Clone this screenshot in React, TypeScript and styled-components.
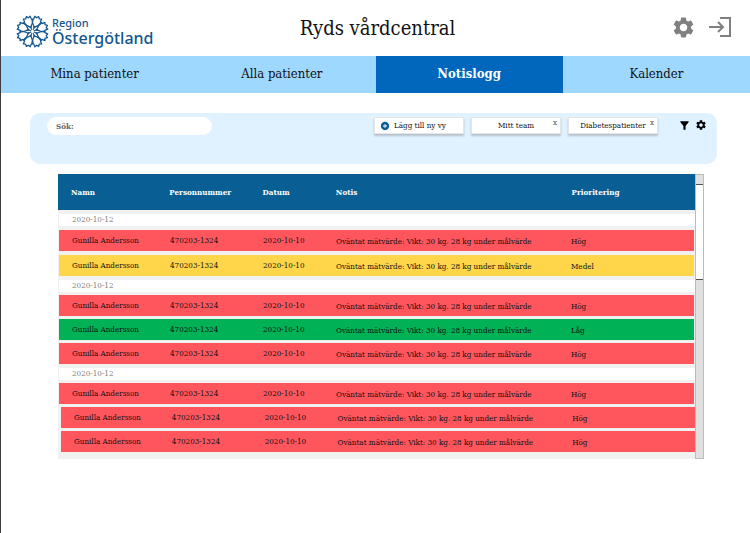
import React from "react";
import styled, { createGlobalStyle, css } from "styled-components";
import { MdSettings, MdFilterAlt, MdAddCircle } from "react-icons/md";

const GlobalStyle = createGlobalStyle`
  * { box-sizing: border-box; }
  body { margin: 0; background: #fff; }
  button, input { font: inherit; color: inherit; }
`;

const Page = styled.div`
  min-height: 100vh;
  border-left: 1px solid #3c3c3c;
  color: #111;
  font-family: "DejaVu Serif Condensed", "DejaVu Serif", serif;
  font-size: 8px;
  line-height: 12px;
`;

const Header = styled.header`
  display: grid;
  grid-template-columns: 1fr auto 1fr;
  align-items: center;
  height: 56px;
  padding: 0 18px 0 14px;
`;

const Logo = styled.a`
  display: flex;
  align-items: center;
  gap: 2px;
  padding-top: 6px;
  color: #14568f;
  text-decoration: none;
  font-family: "Noto Sans", sans-serif;
`;

const LogoText = styled.span`
  display: flex;
  flex-direction: column;
  font-size: 16px;
  font-weight: 500;
  line-height: 16px;
`;

const LogoSmall = styled.span`
  font-size: 11px;
  line-height: 14px;
`;

const Title = styled.h1`
  margin: 0 0 0 8px;
  font-size: 20px;
  line-height: 24px;
  font-weight: 400;
`;

const HeaderActions = styled.div`
  display: flex;
  justify-content: flex-end;
  align-items: center;
  gap: 12px;
  padding-bottom: 2px;
  color: #808080;
`;

const IconButton = styled.button`
  display: flex;
  padding: 0;
  border: 0;
  background: none;
  cursor: pointer;
`;

const Nav = styled.nav`
  display: grid;
  grid-template-columns: repeat(4, 1fr);
  background: #9fd8ff;
`;

const Tab = styled.a<{ $active?: boolean }>`
  height: 37px;
  font-size: 13px;
  line-height: 36px;
  text-align: center;
  text-decoration: none;
  color: #111;
  ${(p) =>
    p.$active &&
    css`
      background: #0067bc;
      color: #fff;
      font-weight: 700;
    `}
`;

const Toolbar = styled.section`
  display: flex;
  align-items: flex-start;
  justify-content: space-between;
  height: 51px;
  margin: 20px 33px 0 29px;
  padding: 4px 10px 0 17px;
  border-radius: 10px;
  background: #e0f1ff;
`;

const Search = styled.label`
  display: flex;
  align-items: center;
  width: 165px;
  height: 18px;
  padding: 0 9px;
  border-radius: 9px;
  background: #fff;
  color: #666;
  font-weight: 700;
`;

const SearchInput = styled.input`
  flex: 1;
  min-width: 0;
  margin-left: 4px;
  padding: 0;
  border: 0;
  outline: 0;
  background: none;
`;

const ToolbarActions = styled.div`
  display: flex;
  align-items: center;
  gap: 7px;
`;

const ViewItem = styled.div`
  position: relative;
  display: flex;
`;

const ViewButton = styled.button<{ $withIcon?: boolean }>`
  display: flex;
  align-items: center;
  justify-content: ${(p) => (p.$withIcon ? "flex-start" : "center")};
  gap: 4px;
  width: 90px;
  height: 17px;
  padding: 0 0 0 ${(p) => (p.$withIcon ? 5 : 0)}px;
  border: 1px solid #e6e6e6;
  background: #fff;
  box-shadow: 0 2px 2px rgba(0, 0, 0, 0.2);
  white-space: nowrap;
  cursor: pointer;
`;

const CloseButton = styled.button`
  position: absolute;
  top: 2px;
  right: 4px;
  padding: 0;
  border: 0;
  background: none;
  color: #555;
  line-height: 8px;
  cursor: pointer;
`;

const ToolIcons = styled.div`
  display: flex;
  gap: 4px;
  margin-left: 13px;
  color: #000;
`;

const LogArea = styled.section`
  display: flex;
  margin: 10px 46px 0 57px;
`;

const Table = styled.table`
  display: block;
  flex: 1;
  padding-bottom: 7px;
  background: #f1f1f1;
`;

const Head = styled.thead`
  display: block;
`;

const Body = styled.tbody`
  display: flex;
  flex-direction: column;
`;

const columns = css`
  display: grid;
  grid-template-columns: 98fr 93fr 73fr 235fr 123fr;
  align-items: center;
  padding-left: 13px;
`;

const HeadRow = styled.tr`
  ${columns}
  height: 36px;
  background: #095f94;
  color: #fff;
`;

const HeadCell = styled.th`
  padding: 0;
  text-align: left;
  font-weight: 700;
`;

const priorityColors = { Hög: "#ff565e", Medel: "#ffd54a", Låg: "#00b156" };
type Priority = keyof typeof priorityColors;

const NoticeRow = styled.tr<{ $priority: Priority; $gap: number; $indent?: boolean }>`
  ${columns}
  height: 21px;
  margin-top: ${(p) => p.$gap}px;
  margin-left: ${(p) => (p.$indent ? 2 : 0)}px;
  margin-right: ${(p) => (p.$indent ? 0 : 1)}px;
  border-left: 1px solid #f1f1f1;
  background: ${(p) => priorityColors[p.$priority]};
`;

const Cell = styled.td<{ $low?: boolean }>`
  padding: ${(p) => (p.$low ? "2px 0 0" : "0")};
  white-space: nowrap;
`;

const DateRow = styled.tr`
  display: block;
  height: 12px;
  margin: 4px 0 0 1px;
  padding-left: 13px;
  background: #fff;
  color: #808080;
`;

const DateCell = styled.th`
  display: block;
  padding: 0;
  font-weight: 400;
  text-align: left;
`;

const ScrollTrack = styled.div`
  display: flex;
  flex-direction: column;
  width: 9px;
  padding-top: 9px;
  border: 1px solid #bcbcbc;
  background: #e0e0e0;
`;

const ScrollThumb = styled.div`
  height: 96px;
  border-top: 1px solid #555;
  border-bottom: 1px solid #555;
  background: #fff;
`;

type Group = {
  date: string;
  gap: number;
  rows: { priority: Priority; indent?: boolean }[];
};

const groups: Group[] = [
  { date: "2020-10-12", gap: 4, rows: [{ priority: "Hög" }, { priority: "Medel" }] },
  {
    date: "2020-10-12",
    gap: 3,
    rows: [{ priority: "Hög" }, { priority: "Låg" }, { priority: "Hög" }],
  },
  {
    date: "2020-10-12",
    gap: 3,
    rows: [
      { priority: "Hög" },
      { priority: "Hög", indent: true },
      { priority: "Hög", indent: true },
    ],
  },
];

const petals = [0, 45, 90, 135, 180, 225, 270, 315];

function FlowerMark() {
  return (
    <svg width="35" height="35" viewBox="-18 -18 36 36" fill="none" stroke="currentColor" strokeLinejoin="round" aria-hidden="true">
      {petals.map((angle) => (
        <g key={angle} transform={`rotate(${angle + 22.5})`}>
          <path strokeWidth="1.3" d="M0-4 C-1-7-4.4-8-5.2-11.4 L-3.8-12.2 L-3.8-15.4 L-1.6-14.6 L0-16.6 L1.6-14.6 L3.8-15.4 L3.8-12.2 L5.2-11.4 C4.4-8 1-7 0-4Z" />
          <path strokeWidth="1" d="M0-1.5V-6" />
        </g>
      ))}
    </svg>
  );
}

function ExitIcon() {
  return (
    <svg width="24" height="22" viewBox="0 0 24 22" fill="none" stroke="currentColor" strokeWidth="2" aria-hidden="true">
      <path d="M12 2H22V20H12M1 11H15M10 6L15 11L10 16" />
    </svg>
  );
}

export default function App() {
  return (
    <>
      <GlobalStyle />
      <Page>
        <Header>
          <Logo href="#">
            <FlowerMark />
            <LogoText>
              <LogoSmall>Region</LogoSmall>
              <span>Östergötland</span>
            </LogoText>
          </Logo>
          <Title>Ryds vårdcentral</Title>
          <HeaderActions>
            <IconButton aria-label="Inställningar"><MdSettings size={25} /></IconButton>
            <IconButton aria-label="Logga ut"><ExitIcon /></IconButton>
          </HeaderActions>
        </Header>
        <Nav>
          <Tab href="#">Mina patienter</Tab>
          <Tab href="#">Alla patienter</Tab>
          <Tab href="#" $active aria-current="page">Notislogg</Tab>
          <Tab href="#">Kalender</Tab>
        </Nav>
        <main>
          <Toolbar>
            <Search>
              Sök:
              <SearchInput type="text" />
            </Search>
            <ToolbarActions>
              <ViewButton $withIcon>
                <MdAddCircle size={10} color="#095f94" />
                Lägg till ny vy
              </ViewButton>
              {["Mitt team", "Diabetespatienter"].map((view) => (
                <ViewItem key={view}>
                  <ViewButton>{view}</ViewButton>
                  <CloseButton aria-label={`Stäng ${view}`}>x</CloseButton>
                </ViewItem>
              ))}
              <ToolIcons>
                <IconButton aria-label="Filtrera"><MdFilterAlt size={13} /></IconButton>
                <IconButton aria-label="Anpassa"><MdSettings size={12} /></IconButton>
              </ToolIcons>
            </ToolbarActions>
          </Toolbar>
          <LogArea>
            <Table>
              <Head>
                <HeadRow>
                  {["Namn", "Personnummer", "Datum", "Notis", "Prioritering"].map((label) => (
                    <HeadCell key={label} scope="col">{label}</HeadCell>
                  ))}
                </HeadRow>
              </Head>
              <Body>
                {groups.map((group, g) => (
                  <React.Fragment key={g}>
                    <DateRow>
                      <DateCell>{group.date}</DateCell>
                    </DateRow>
                    {group.rows.map((row, r) => (
                      <NoticeRow key={r} $priority={row.priority} $gap={group.gap} $indent={row.indent}>
                        <Cell>Gunilla Andersson</Cell>
                        <Cell>470203-1324</Cell>
                        <Cell>2020-10-10</Cell>
                        <Cell $low>Oväntat mätvärde: Vikt: 30 kg. 28 kg under målvärde</Cell>
                        <Cell $low>{row.priority}</Cell>
                      </NoticeRow>
                    ))}
                  </React.Fragment>
                ))}
              </Body>
            </Table>
            <ScrollTrack>
              <ScrollThumb />
            </ScrollTrack>
          </LogArea>
        </main>
      </Page>
    </>
  );
}
